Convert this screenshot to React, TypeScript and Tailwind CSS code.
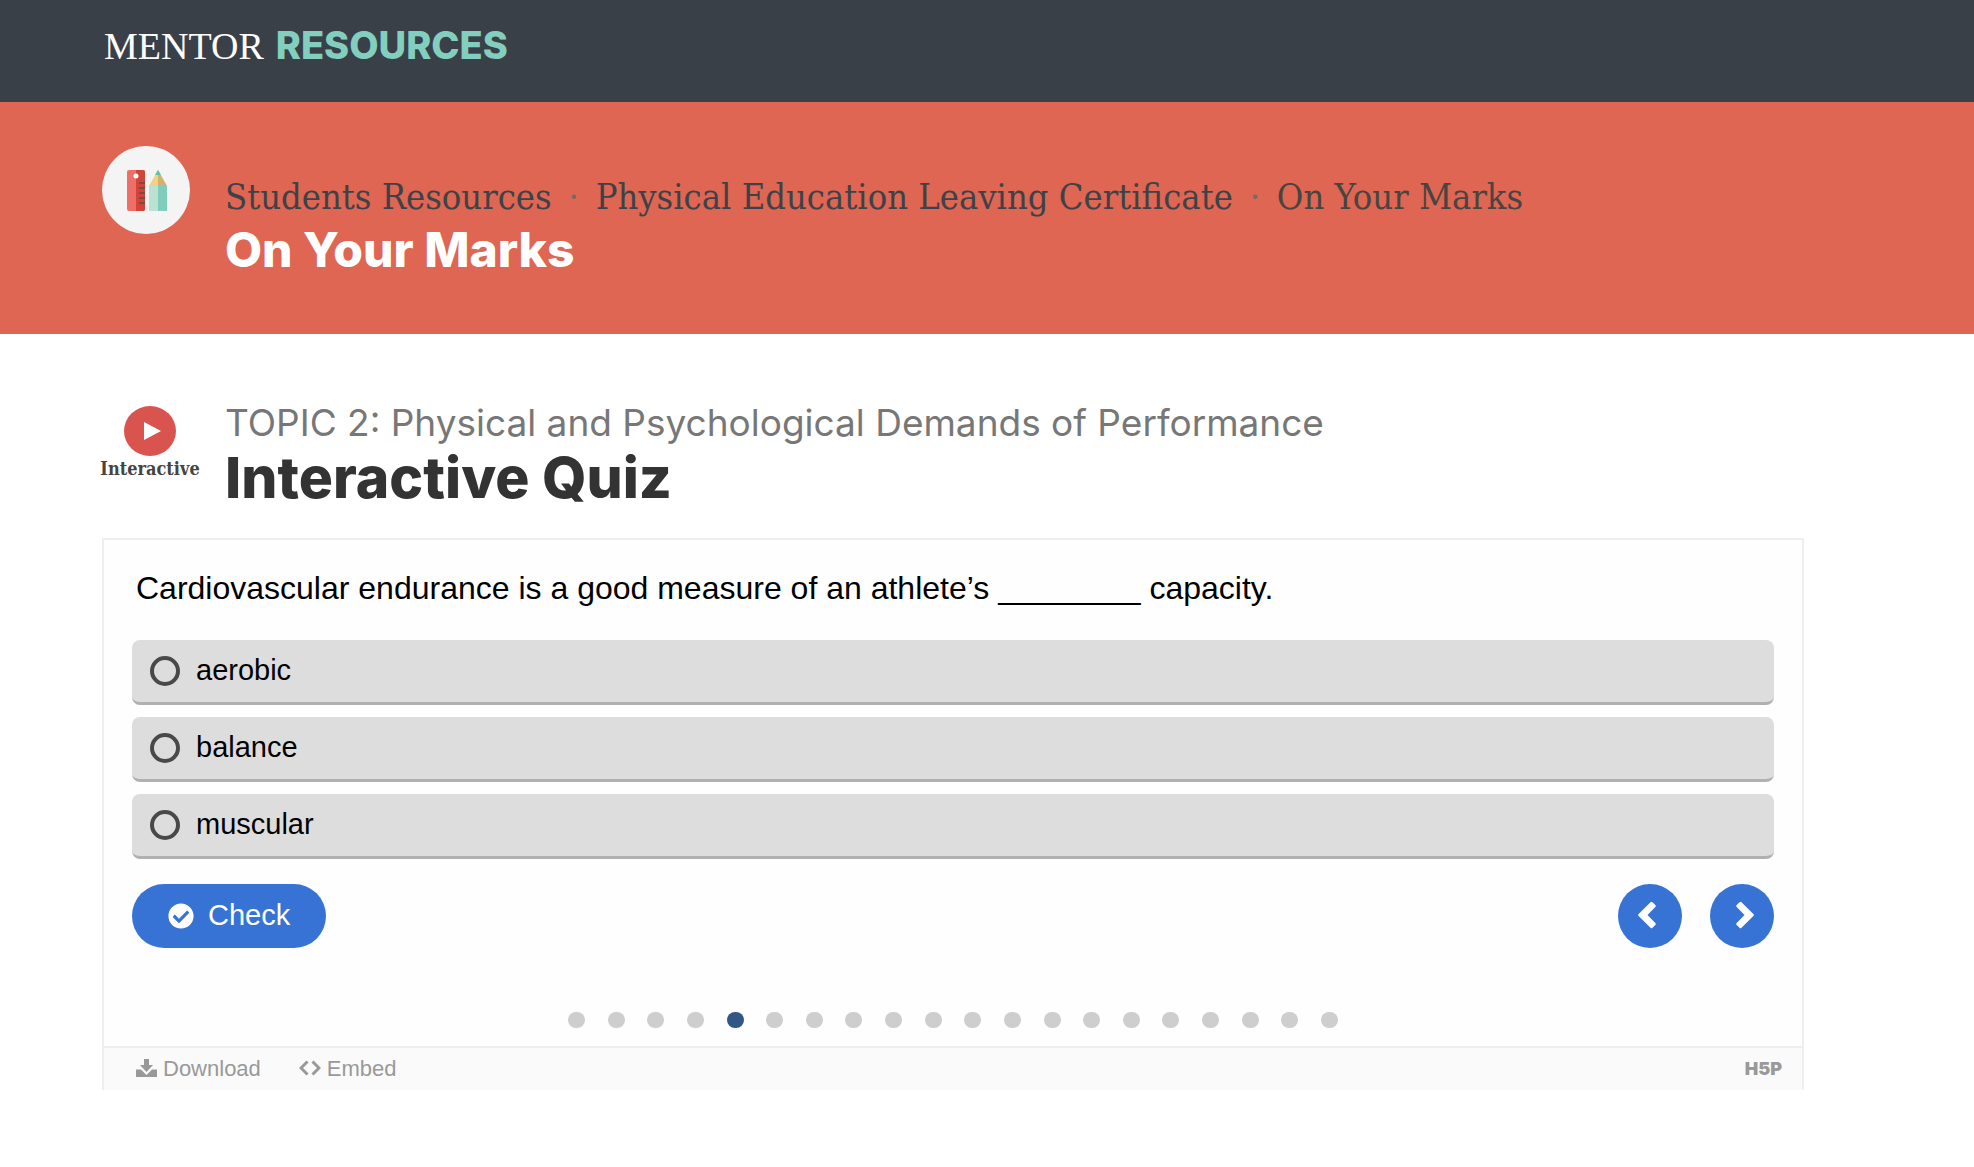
import { useState } from "react";
import { FaCheckCircle } from "react-icons/fa";

const ANSWERS = ["aerobic", "balance", "muscular"];
const SLIDE_COUNT = 20;
const CURRENT_SLIDE = 4;

function StationeryIcon() {
  return (
    <svg viewBox="0 0 88 88" className="size-[88px] shrink-0" aria-hidden="true">
      <circle cx="44" cy="44" r="44" fill="#f4f4f4" />
      <rect x="25" y="24" width="18" height="41" rx="2" fill="#ef6f66" />
      <path d="M34 24h7a2 2 0 0 1 2 2v37a2 2 0 0 1-2 2h-7z" fill="#d0453a" />
      <circle cx="34" cy="30" r="2.5" fill="#fff" />
      <path d="M37 37h6M37 42h6M37 47h6M37 52h6M37 57h6" stroke="#7d4a46" strokeWidth="2" />
      <path d="M47 40h9v25h-9z" fill="#b9e2d3" />
      <path d="M56 40h9v25h-9z" fill="#80cdbd" />
      <path d="M56 24l-9 16h9z" fill="#efd187" />
      <path d="M56 24l9 16h-9z" fill="#cfb274" />
      <path d="M56 24l-3 5h6z" fill="#5fc3a8" />
    </svg>
  );
}

function PlayIcon() {
  return (
    <svg viewBox="0 0 52 50" className="h-[50px] w-[52px]" aria-hidden="true">
      <ellipse cx="26" cy="25" rx="26" ry="25" fill="#d9534f" />
      <path d="M20 16l17 9-17 9z" fill="#fff" />
    </svg>
  );
}

function Chevron({ direction }: { direction: "left" | "right" }) {
  return (
    <svg viewBox="0 0 18 28" className="h-7 w-[18px]" fill="#fff" aria-hidden="true">
      {direction === "left" ? (
        <path d="M12.500 1.200q1-1 2 0l2.800 2.800q1 1 0 2L9.500 14l7.800 8q1 1 0 2l-2.800 2.800q-1 1-2 0L.6 15q-.9-1 0-2z" />
      ) : (
        <path d="M5.500 1.200q-1-1-2 0L.7 4q-1 1 0 2l7.800 8-7.800 8q-1 1 0 2l2.800 2.800q1 1 2 0L17.400 15q.9-1 0-2z" />
      )}
    </svg>
  );
}

function DownloadIcon() {
  return (
    <svg viewBox="0 0 21 18" className="h-[18px] w-[21px]" fill="currentColor" aria-hidden="true">
      <path d="M8 0h5v6h4l-6.500 7L4 6h4z" />
      <path d="M0 10.500h5l5.500 5.500 5.500-5.500h5V18H0z" />
    </svg>
  );
}

function EmbedIcon() {
  return (
    <svg viewBox="0 0 22 16" className="h-4 w-[22px]" fill="none" stroke="currentColor" strokeWidth="3" aria-hidden="true">
      <path d="M8.500 1.500L2 8l6.500 6.500M13.500 1.500L20 8l-6.500 6.500" />
    </svg>
  );
}

export default function App() {
  const [selected, setSelected] = useState<string | null>(null);

  return (
    <div className="min-h-screen bg-white font-['Liberation_Sans',Arial,sans-serif] text-black">
      <header className="h-[102px] bg-[#3a4048] pl-[104px] pt-[23px]">
        <a href="#" className="flex items-baseline gap-3 text-[38px] leading-[44px]">
          <span className="font-['Liberation_Serif',serif] text-white">MENTOR</span>
          <span className="font-['Inter',sans-serif] font-extrabold text-[#82cfbf]">RESOURCES</span>
        </a>
      </header>

      <section className="flex h-[232px] gap-[35px] bg-[#de6652] pl-[102px] pt-11">
        <StationeryIcon />
        <div className="pt-7">
          <nav
            aria-label="Breadcrumb"
            className="flex whitespace-nowrap font-['DejaVu_Serif_Condensed','DejaVu_Serif',serif] text-[36px] leading-[46px] text-[#3d4248]"
          >
            <a href="#">Students Resources</a>
            <span className="w-11 text-center text-[#6f6c6a]">·</span>
            <a href="#">Physical Education Leaving Certificate</a>
            <span className="w-11 text-center text-[#6f6c6a]">·</span>
            <span className="text-[#484441]">On Your Marks</span>
          </nav>
          <h1 className="font-['Inter',sans-serif] text-[48px] font-extrabold leading-[60px] text-white">On Your Marks</h1>
        </div>
      </section>

      <main className="pl-[102px] pr-[170px] pt-[70px]">
        <div className="flex h-[134px]">
          <div className="flex w-[123px] shrink-0 flex-col pt-[2px]">
            <div className="flex w-24 flex-col items-center">
              <PlayIcon />
              <span className="font-['DejaVu_Serif_Condensed','DejaVu_Serif',serif] text-[18px] font-bold leading-[26px] text-[#444]">
                Interactive
              </span>
            </div>
          </div>
          <div>
            <p className="whitespace-nowrap font-['Inter',sans-serif] text-[37px] leading-[38px] text-[#777]">
              TOPIC 2: Physical and Psychological Demands of Performance
            </p>
            <h2 className="font-['Inter',sans-serif] text-[57px] font-extrabold leading-[72px] text-[#333]">Interactive Quiz</h2>
          </div>
        </div>

        <div className="border-2 border-b-0 border-[#eee] bg-[#fefefe]">
          <form className="px-7 pt-7" onSubmit={(e) => e.preventDefault()}>
            <fieldset>
              <legend className="px-1 text-[32px] leading-10">
                Cardiovascular endurance is a good measure of an athlete’s ________ capacity.
              </legend>
              <div className="mt-8 flex flex-col gap-3">
                {ANSWERS.map((answer) => (
                  <label
                    key={answer}
                    className="flex h-[65px] items-center gap-4 rounded-lg border-b-3 border-[#b0b0b0] bg-[#ddd] pl-[18px] text-[29px]"
                  >
                    <input
                      type="radio"
                      name="answer"
                      checked={selected === answer}
                      onChange={() => setSelected(answer)}
                      className="size-[30px] appearance-none rounded-full border-4 border-[#494949] checked:bg-[#494949]"
                    />
                    {answer}
                  </label>
                ))}
              </div>
            </fieldset>

            <div className="mt-[25px] flex items-center">
              <button
                type="submit"
                className="mr-auto flex h-16 items-center gap-[14px] rounded-full bg-[#3673d4] px-9 text-[29px] text-white"
              >
                <FaCheckCircle className="size-[26px]" />
                Check
              </button>
              <div className="flex gap-7">
                <button
                  type="button"
                  aria-label="Previous"
                  className="grid size-16 place-items-center rounded-full bg-[#3673d4] pb-[2px] pr-[6px]"
                >
                  <Chevron direction="left" />
                </button>
                <button
                  type="button"
                  aria-label="Next"
                  className="grid size-16 place-items-center rounded-full bg-[#3673d4] pb-[2px] pl-[6px]"
                >
                  <Chevron direction="right" />
                </button>
              </div>
            </div>
          </form>

          <div className="mx-auto mb-[18px] mt-16 flex max-w-[770px] justify-between">
            {Array.from({ length: SLIDE_COUNT }, (_, i) => (
              <button
                key={i}
                type="button"
                aria-label={`Question ${i + 1}`}
                className={i === CURRENT_SLIDE ? "h-4 w-[17px] rounded-full bg-[#335784]" : "h-4 w-[17px] rounded-full bg-[#cecece]"}
              />
            ))}
          </div>

          <footer className="flex h-11 items-center border-t-2 border-[#eee] bg-[#fafafa] pb-[2px] pl-8 pr-5 text-[22px] text-[#999]">
            <button type="button" className="flex items-center gap-[6px]">
              <DownloadIcon />
              Download
            </button>
            <button type="button" className="ml-[38px] flex items-center gap-[6px]">
              <EmbedIcon />
              Embed
            </button>
            <a href="#" className="ml-auto font-['Inter',sans-serif] text-[18px] font-black">
              H5P
            </a>
          </footer>
        </div>
      </main>
    </div>
  );
}
